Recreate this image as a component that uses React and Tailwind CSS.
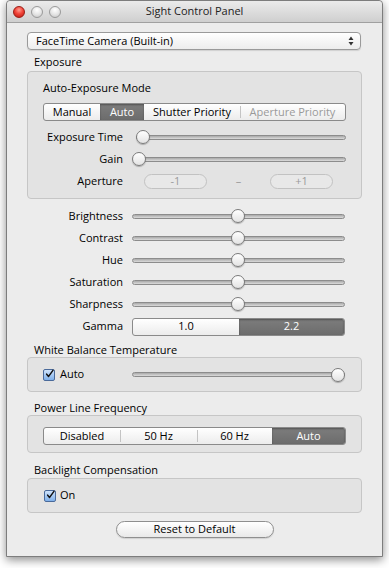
const font = { fontFamily: '"Open Sans", "Noto Sans", sans-serif' }

// ── Small controls ──────────────────────────────────────
const Light = ({ red }) => (
  <span
    className={
      red
        ? 'block h-[12px] w-[12px] rounded-full border border-[#9b1c14] bg-[radial-gradient(circle_at_50%_30%,#ff9d90_0%,#f2453a_45%,#b8170e_100%)]'
        : 'block h-[12px] w-[12px] rounded-full border border-[#9a9a9a] bg-[radial-gradient(circle_at_50%_30%,#ffffff_0%,#e6e6e6_50%,#c4c4c4_100%)]'
    }
  />
)

const Slider = ({ knob }) => (
  <div className="relative flex h-[16px] flex-1 items-center">
    <div className="h-[5px] w-full rounded-full border border-[#8c8c8c] bg-gradient-to-b from-[#a9a9a9] to-[#dcdcdc]" />
    <span
      className={`absolute top-[1px] h-[14px] w-[14px] rounded-full border border-[#7b7b7b] bg-gradient-to-b from-white to-[#e3e3e3] shadow-[0_1px_1px_rgba(0,0,0,0.25)] ${knob}`}
    />
  </div>
)

const Segmented = ({ items, selected, className = '' }) => (
  <div
    className={`flex h-[18px] overflow-hidden rounded-[3px] border border-[#8a8a8a] bg-gradient-to-b from-white to-[#ececec] text-[11px] ${className}`}
  >
    {items.map((it, i) => {
      const on = i === selected
      const prevOn = i - 1 === selected
      return (
        <div key={it.label} className={`relative flex items-center justify-center ${it.w}`}>
          {i > 0 && !on && !prevOn && (
            <span className="absolute left-0 top-[2px] h-[12px] w-px bg-[#c4c4c4]" />
          )}
          <div
            className={
              on
                ? 'flex h-full w-full items-center justify-center bg-gradient-to-b from-[#7d7d7d] to-[#6c6c6c] text-white shadow-[inset_0_1px_2px_rgba(0,0,0,0.35)]'
                : `flex h-full w-full items-center justify-center ${it.dim ? 'text-[#9a9a9a]' : 'text-black'}`
            }
          >
            {it.label}
          </div>
        </div>
      )
    })}
  </div>
)

const Check = () => (
  <span className="flex h-[12px] w-[12px] items-center justify-center rounded-[2px] border border-[#4a6a9a] bg-gradient-to-b from-[#cfe3fb] to-[#7fb0ea]">
    <svg width="12" height="12" viewBox="0 0 12 12" className="-mt-[2px] ml-[1px]">
      <path d="M2.2 6.2 L4.8 9.2 L10.6 1.2" fill="none" stroke="#111" strokeWidth="2" strokeLinecap="round" strokeLinejoin="round" />
    </svg>
  </span>
)

const GroupLabel = ({ children }) => (
  <div className="flex h-[14px] items-center pl-[7px] text-[11px] text-black">{children}</div>
)

const Box = ({ className = '', children }) => (
  <div className={`rounded-[4px] border border-[#c6c6c6] bg-[#e3e3e3] ${className}`}>{children}</div>
)

const ExpRow = ({ label, knob }) => (
  <div className="flex h-[22px] items-center">
    <div className="w-[80px] text-right text-[11px] text-black">{label}</div>
    <div className="ml-[13px] flex flex-1">
      <Slider knob={knob} />
    </div>
  </div>
)

const PicRow = ({ label }) => (
  <div className="flex h-[22px] items-center pr-[17px]">
    <div className="w-[96px] text-right text-[11px] text-black">{label}</div>
    <div className="ml-[9px] flex flex-1">
      <Slider knob="left-[99px]" />
    </div>
  </div>
)

// ── Main ───────────────────────────────────────────────
export default function App() {
  return (
    <div className="h-[568px] w-[389px] overflow-hidden bg-white pl-[6px]" style={font}>
      <div className="flex h-[557px] w-[377px] flex-col rounded-t-[4px] border border-[#7d7d7d] bg-[#ececec] shadow-[0_3px_10px_rgba(0,0,0,0.45)]">
        {/* Title bar */}
        <div className="relative flex h-[22px] items-center justify-center rounded-t-[4px] border-b border-[#a0a0a0] bg-gradient-to-b from-[#ebebeb] to-[#cfcfcf] text-[11px] text-[#222]">
          <div className="absolute left-[6px] top-[5px] flex gap-[6px]">
            <Light red />
            <Light />
            <Light />
          </div>
          Sight Control Panel
        </div>

        <div className="flex flex-col px-[20px]">
          {/* Camera popup */}
          <div className="mt-[9px] flex h-[18px] w-[334px] items-center justify-between rounded-[4px] border border-[#9a9a9a] bg-gradient-to-b from-white to-[#ededed] pl-[8px] pr-[6px] text-[11px] text-black shadow-[0_1px_1px_rgba(0,0,0,0.12)]">
            <span>FaceTime Camera (Built-in)</span>
            <svg width="6" height="10" viewBox="0 0 6 10">
              <path d="M3 0.5 L5.5 4 H0.5 Z M3 9.5 L5.5 6 H0.5 Z" fill="#333" />
            </svg>
          </div>

          {/* Exposure */}
          <div className="mt-[5px]">
            <GroupLabel>Exposure</GroupLabel>
          </div>
          <Box className="mt-[2px] h-[128px] px-[15px] pt-[7px]">
            <div className="flex h-[18px] items-center text-[11px] text-black">Auto-Exposure Mode</div>
            <Segmented
              className="mt-[6px]"
              selected={1}
              items={[
                { label: 'Manual', w: 'w-[56px]' },
                { label: 'Auto', w: 'w-[44px]' },
                { label: 'Shutter Priority', w: 'w-[96px]' },
                { label: 'Aperture Priority', w: 'flex-1', dim: true },
              ]}
            />
            <div className="mt-[5px]">
              <ExpRow label="Exposure Time" knob="left-0" />
              <ExpRow label="Gain" knob="-left-[4px]" />
              <div className="flex h-[22px] items-center text-[11px]">
                <div className="w-[80px] text-right text-black">Aperture</div>
                <div className="ml-[21px] flex h-[15px] w-[63px] items-center justify-center rounded-full border border-[#c2c2c2] bg-[#e8e8e8] text-[#9a9a9a]">
                  -1
                </div>
                <div className="w-[63px] text-center text-[#9a9a9a]">–</div>
                <div className="flex h-[15px] w-[63px] items-center justify-center rounded-full border border-[#c2c2c2] bg-[#e8e8e8] text-[#9a9a9a]">
                  +1
                </div>
              </div>
            </div>
          </Box>

          {/* Picture controls */}
          <div className="mt-[6px]">
            <PicRow label="Brightness" />
            <PicRow label="Contrast" />
            <PicRow label="Hue" />
            <PicRow label="Saturation" />
            <PicRow label="Sharpness" />
            <div className="flex h-[23px] items-center pr-[17px]">
              <div className="w-[96px] text-right text-[11px] text-black">Gamma</div>
              <Segmented
                className="ml-[9px] flex-1"
                selected={1}
                items={[
                  { label: '1.0', w: 'w-[106px]' },
                  { label: '2.2', w: 'flex-1' },
                ]}
              />
            </div>
          </div>

          {/* White balance */}
          <div className="mt-[5px]">
            <GroupLabel>White Balance Temperature</GroupLabel>
          </div>
          <Box className="flex h-[35px] items-center pl-[15px] pr-[16px]">
            <Check />
            <span className="ml-[5px] text-[11px] text-black">Auto</span>
            <div className="ml-auto flex w-[213px]">
              <Slider knob="left-[199px]" />
            </div>
          </Box>

          {/* Power line */}
          <div className="mt-[9px]">
            <GroupLabel>Power Line Frequency</GroupLabel>
          </div>
          <Box className="h-[38px] px-[15px] pt-[11px]">
            <Segmented
              selected={3}
              items={[
                { label: 'Disabled', w: 'w-[76px]' },
                { label: '50 Hz', w: 'w-[77px]' },
                { label: '60 Hz', w: 'w-[75px]' },
                { label: 'Auto', w: 'flex-1' },
              ]}
            />
          </Box>

          {/* Backlight */}
          <div className="mt-[10px]">
            <GroupLabel>Backlight Compensation</GroupLabel>
          </div>
          <Box className="mt-[1px] flex h-[35px] items-center pl-[16px]">
            <Check />
            <span className="ml-[4px] text-[11px] text-black">On</span>
          </Box>

          <div className="mt-[8px] flex justify-center">
            <div className="flex h-[17px] w-[158px] items-center justify-center rounded-full border border-[#8f8f8f] bg-gradient-to-b from-white to-[#e9e9e9] text-[11px] text-black shadow-[0_1px_1px_rgba(0,0,0,0.12)]">
              Reset to Default
            </div>
          </div>
        </div>
      </div>
    </div>
  )
}
